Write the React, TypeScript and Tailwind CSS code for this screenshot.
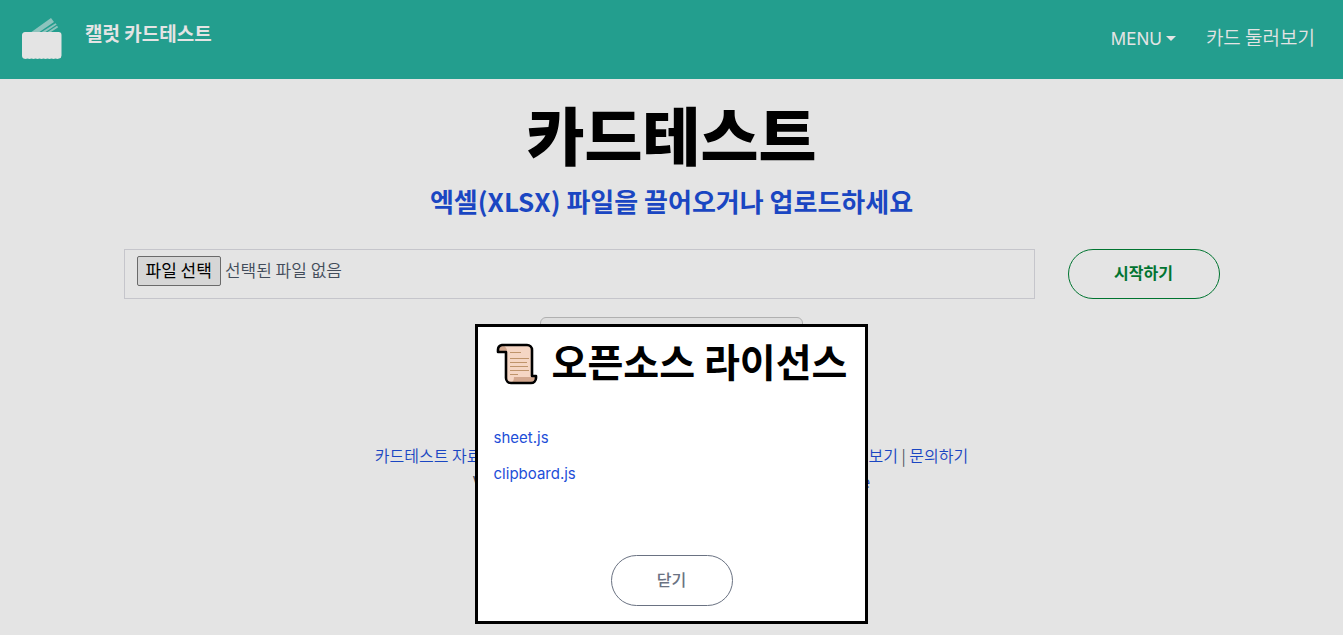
import { useState } from 'react';

const licenses = [
  { name: 'sheet.js', href: '#sheetjs' },
  { name: 'clipboard.js', href: '#clipboardjs' },
];

const footerLinks = [
  { label: '카드테스트 자료실', href: '#archive' },
  { label: '사용 방법 안내문', href: '#guide' },
  { label: '오픈소스 라이선스', href: '#license' },
  { label: '카드테스트 둘러보기', href: '#cards' },
  { label: '문의하기', href: '#contact' },
];

export default function App() {
  const [showLicense, setShowLicense] = useState(true);
  const [fileName, setFileName] = useState('');

  return (
    <div className="min-h-screen bg-[#fefefe] font-['Noto_Sans_CJK_KR',sans-serif] text-black">
      <Header />

      <main className="mx-auto w-full max-w-[1096px]">
        <h1 className="mt-5 text-center text-[63px] leading-[68px] font-black">
          카드테스트
        </h1>
        <h2 className="mt-4 text-center text-[26px] leading-9 font-bold text-[#1d4ed8]">
          엑셀(XLSX) 파일을 끌어오거나 업로드하세요
        </h2>

        <form
          onSubmit={(e) => e.preventDefault()}
          className="mt-[30px] flex items-center gap-[33px]"
        >
          <label className="flex h-[50px] flex-1 cursor-pointer items-start gap-1 border border-[#dcdce2] px-3 py-1.5 text-[17px] font-[350] text-gray-600">
            <input
              type="file"
              accept=".xlsx"
              onChange={(e) => setFileName(e.target.files?.[0]?.name ?? '')}
              className="sr-only"
            />
            <span className="flex h-[30px] items-center rounded-xs border border-[#767676] bg-[#efefef] px-2 pb-0.5 font-normal text-black">
              파일 선택
            </span>
            <span className="leading-7">{fileName || '선택된 파일 없음'}</span>
          </label>
          <button
            type="submit"
            className="h-[50px] w-[152px] rounded-full border border-green-700 pb-1 text-base font-bold text-green-700"
          >
            시작하기
          </button>
        </form>

        <div className="mt-[18px] flex justify-center">
          <button
            type="button"
            aria-label="카드 둘러보기"
            className="h-12 w-[263px] rounded-md border border-[#c4c4c4] bg-[#f8f8f8]"
          />
        </div>
      </main>

      <footer className="mt-[77px] text-center text-base leading-[26px] font-[350] text-gray-600">
        <p>
          {footerLinks.map((link, i) => (
            <span key={link.href}>
              {i > 0 && ' | '}
              <a href={link.href} className="text-[#1d4ed8]">
                {link.label}
              </a>
            </span>
          ))}
        </p>
        <p>
          Ver 1.0.0 | Made by Carrot Cards | Hosted by{' '}
          <a href="#host" className="text-[#1d4ed8]">
            Cloudflare
          </a>
        </p>
      </footer>

      {showLicense && <LicenseDialog onClose={() => setShowLicense(false)} />}
    </div>
  );
}

function Header() {
  return (
    <header className="flex h-[79px] items-center justify-between bg-[#28b09f] pr-7 pb-0.5 pl-5 text-[#fefefe]">
      <a href="#home" className="flex items-center gap-[21px]">
        <Logo />
        <span className="pb-3 text-[19px] leading-7 font-bold">캘럿 카드테스트</span>
      </a>
      <nav className="flex items-center gap-[30px] text-[19px] leading-7">
        <button
          type="button"
          className="flex items-center gap-1 font-[Inter,sans-serif] text-[17px]"
        >
          MENU
          <svg viewBox="0 0 10 5" className="h-[5px] w-2.5" fill="currentColor">
            <path d="M0 0h10L5 5z" />
          </svg>
        </button>
        <a href="#cards" className="pb-1 font-[350]">
          카드 둘러보기
        </a>
      </nav>
    </header>
  );
}

function Logo() {
  return (
    <svg viewBox="0 0 44 44" className="h-11 w-11" fill="currentColor">
      <g opacity="0.55">
        <path d="M10 16 31 1l3 4-16 11z" />
        <path d="M20 16 35.500 6.200l1.200 1.400L24 16z" />
        <path d="M26 16l11-7.200 1.200 1.400L29.500 16z" />
      </g>
      <path d="M5.500 15h33a3 3 0 0 1 3 3v20.500a3 3 0 0 1-2.500 3l-1.500.6-2-.6-2 .6-2-.6-2 .6-2-.6-2 .6-2-.6-2 .6-2-.6-2 .6-2-.6-2 .6-2-.6-2 .6-2-.6-2 .6-2-.6A3 3 0 0 1 2 38.500V18a3 3 0 0 1 3.500-3z" />
    </svg>
  );
}

function ScrollIcon() {
  return (
    <svg viewBox="0 0 42 42" className="h-[42px] w-[42px]" strokeLinejoin="round">
      <path
        d="M6 2h25a5 5 0 0 1 5 5v26h4v2a5 5 0 0 1-5 5H15a5 5 0 0 1-5-5V9H2V7a5 5 0 0 1 4-5z"
        fill="#f5d6c4"
      />
      <path d="M3 8c0-3 2-5 4-5s4 2 4 5z" fill="#d3a88f" />
      <path d="M18 34h21c0 3-2 5-4 5H15c2 0 3-2 3-5z" fill="#d3a88f" />
      <path
        d="M14 9.500h11M14 15.500h19M14 19.500h17M14 23.500h18M14 27.500h19M14 31.500h8"
        stroke="#bf946b"
        strokeWidth="1.1"
      />
      <path
        d="M6 2h25a5 5 0 0 1 5 5v26h4v2a5 5 0 0 1-5 5H15a5 5 0 0 1-5-5V9H2V7a5 5 0 0 1 4-5z"
        fill="none"
        stroke="#000"
        strokeWidth="2.6"
      />
    </svg>
  );
}

function LicenseDialog({ onClose }: { onClose: () => void }) {
  return (
    <div className="fixed inset-0 flex items-end justify-center bg-black/10 pb-[11px]">
      <div
        role="dialog"
        aria-modal="true"
        aria-labelledby="license-title"
        className="flex min-h-[300px] flex-col border-[3px] border-black bg-white px-4 pt-[9px] pb-[15px]"
      >
        <h2
          id="license-title"
          className="flex items-center gap-3.5 px-0.5 text-[39px] leading-[48px] font-bold"
        >
          <ScrollIcon />
          <span className="pb-2">오픈소스 라이선스</span>
        </h2>
        <ul className="mt-[34px] flex flex-col gap-3 font-[Inter,sans-serif] text-[15px] leading-6">
          {licenses.map((item) => (
            <li key={item.name}>
              <a href={item.href} className="text-[#1d4ed8]">
                {item.name}
              </a>
            </li>
          ))}
        </ul>
        <button
          type="button"
          onClick={onClose}
          className="mx-auto mt-auto h-[51px] w-[122px] rounded-full border border-gray-500 pb-1 text-base font-medium text-gray-500"
        >
          닫기
        </button>
      </div>
    </div>
  );
}
